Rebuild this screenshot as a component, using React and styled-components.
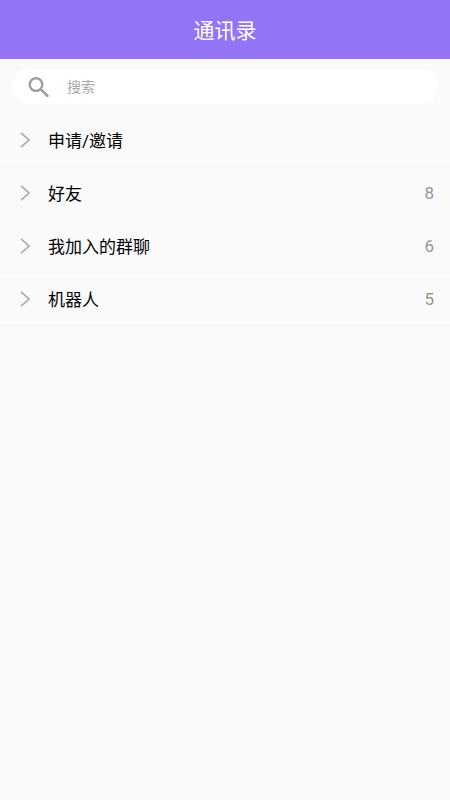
import styled, { createGlobalStyle } from 'styled-components';

const GlobalStyle = createGlobalStyle`
  html, body {
    margin: 0;
    padding: 0;
    background: #fafafa;
  }
  * {
    box-sizing: border-box;
  }
`;

const Page = styled.div`
  width: 450px;
  height: 800px;
  background: #fafafa;
  font-family: Roboto, "Noto Sans CJK SC", sans-serif;
  overflow: hidden;
`;

const Header = styled.header`
  height: 59px;
  padding-bottom: 2px;
  background: #9373f6;
  color: #fff;
  font-size: 21px;
  display: flex;
  align-items: center;
  justify-content: center;
`;

const SearchBar = styled.div`
  height: 35px;
  margin: 10px 12px 10px 12px;
  padding-left: 16px;
  background: #fff;
  border-radius: 17px;
  display: flex;
  align-items: center;
  gap: 18px;
  color: #a8a8a8;
  font-size: 14px;
`;

const Placeholder = styled.span`
  padding-bottom: 2px;
`;

const Row = styled.div`
  height: 53px;
  padding: 0 16px 0 20px;
  display: flex;
  align-items: center;
  border-bottom: 1px solid #f6f6f6;
`;

const Label = styled.span`
  margin-left: 18px;
  padding-bottom: 2px;
  flex: 1;
  font-size: 17px;
  color: #000;
`;

const Count = styled.span`
  font-size: 17px;
  color: #969696;
`;

const rows = [
  { label: '申请/邀请' },
  { label: '好友', count: 8 },
  { label: '我加入的群聊', count: 6 },
  { label: '机器人', count: 5 },
];

function SearchIcon() {
  return (
    <svg width="21" height="20" viewBox="0 0 21 20" fill="none" stroke="#9e9e9e" strokeWidth="2.4">
      <circle cx="8" cy="7.6" r="6.3" />
      <path d="M12.8 12.4 L19.4 18.8" strokeLinecap="round" strokeWidth="2.6" />
    </svg>
  );
}

function Chevron() {
  return (
    <svg width="10" height="16" viewBox="0 0 10 16" fill="none" stroke="#a9a9a9" strokeWidth="1.6">
      <path d="M1 0.8 L9 8 L1 15.2" />
    </svg>
  );
}

export default function App() {
  return (
    <Page>
      <GlobalStyle />
      <Header>通讯录</Header>
      <SearchBar>
        <SearchIcon />
        <Placeholder>搜索</Placeholder>
      </SearchBar>
      {rows.map((row) => (
        <Row key={row.label}>
          <Chevron />
          <Label>{row.label}</Label>
          {row.count !== undefined && <Count>{row.count}</Count>}
        </Row>
      ))}
    </Page>
  );
}
